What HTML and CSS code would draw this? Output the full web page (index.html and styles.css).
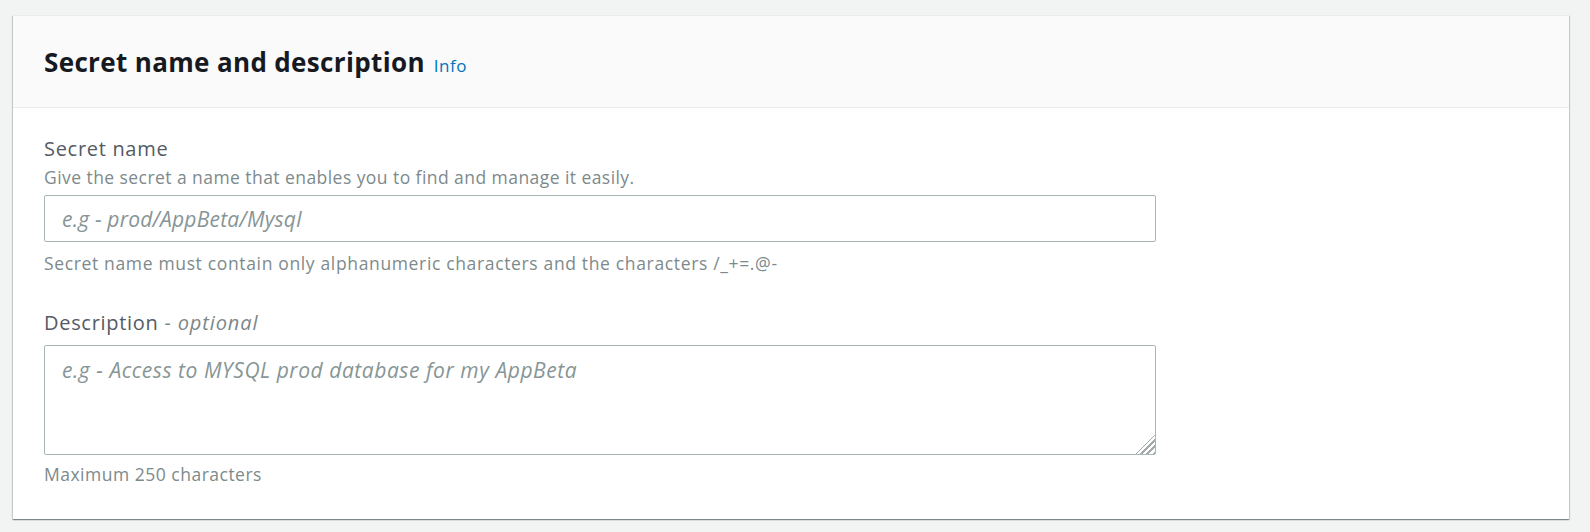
FILE: index.html
```html
<!DOCTYPE html>
<html lang="en">
<head>
<meta charset="utf-8">
<title>Secret name and description</title>
<link rel="stylesheet" href="styles.css">
</head>
<body>
  <section class="card">
    <header class="card-header">
      <h2 class="card-title">Secret name and description</h2>
      <a class="info-link" href="#">Info</a>
    </header>
    <div class="card-body">
      <div class="field">
        <label class="field-label" for="secret-name">Secret name</label>
        <div class="field-desc">Give the secret a name that enables you to find and manage it easily.</div>
        <input class="text-input" id="secret-name" type="text" placeholder="e.g - prod/AppBeta/Mysql">
        <div class="field-constraint">Secret name must contain only alphanumeric characters and the characters /_+=.@-</div>
      </div>
      <div class="field field-second">
        <label class="field-label" for="secret-desc">Description <span class="optional">- optional</span></label>
        <textarea class="text-area" id="secret-desc" placeholder="e.g - Access to MYSQL prod database for my AppBeta"></textarea>
        <div class="field-constraint field-max">Maximum 250 characters</div>
      </div>
    </div>
  </section>
</body>
</html>
```

FILE: styles.css
```css
html, body {
  margin: 0;
  background: #f2f3f3;
}

body {
  padding: 15px 21px 14px 13px;
  font-family: "Open Sans", "Noto Sans", sans-serif;
  color: #16191f;
}

.card {
  background: #ffffff;
  border-top: 1px solid #eaeded;
  box-shadow: 0 1px 1px 0 rgba(0, 28, 36, 0.3),
              1px 1px 1px 0 rgba(0, 28, 36, 0.15),
              -1px 1px 1px 0 rgba(0, 28, 36, 0.15);
}

.card-header {
  display: flex;
  align-items: baseline;
  gap: 9px;
  padding: 30px 31px 29px;
  background: #fafafa;
  border-bottom: 1px solid #eaeded;
}

.card-title {
  margin: 0;
  font-size: 26px;
  line-height: 32px;
  font-weight: 700;
  letter-spacing: 0.35px;
  color: #16191f;
}

.info-link {
  font-size: 17px;
  letter-spacing: 0.5px;
  color: #0073bb;
  text-decoration: none;
}

.card-body {
  padding: 31px 31px 36px;
}

.field {
  display: flex;
  flex-direction: column;
  align-items: flex-start;
}

.field-second {
  margin-top: 41px;
}

.field-label {
  font-size: 20px;
  line-height: 20px;
  letter-spacing: 0.7px;
  color: #545b64;
}

.optional {
  font-style: italic;
  color: #7b8789;
  letter-spacing: 0.9px;
}

.field-desc,
.field-constraint {
  font-size: 17.5px;
  line-height: 18px;
  letter-spacing: 0.5px;
  color: #7d8a8c;
}

.field-desc {
  margin-top: 9px;
  letter-spacing: 0.44px;
}

.text-input {
  box-sizing: border-box;
  width: 1112px;
  height: 47px;
  margin-top: 9px;
  padding: 1px 17px 0;
  border: 1px solid #aab7b8;
  border-radius: 2px;
  background: #ffffff;
  font-family: inherit;
  font-size: 21px;
  font-style: italic;
  letter-spacing: 0.2px;
  color: #16191f;
  outline: none;
}

.text-area {
  box-sizing: border-box;
  display: block;
  width: 1112px;
  height: 110px;
  margin-top: 12px;
  padding: 11px 17px 0;
  border: 1px solid #aab7b8;
  border-radius: 2px;
  font-family: inherit;
  font-size: 21px;
  line-height: 26px;
  font-style: italic;
  letter-spacing: 0.55px;
  color: #16191f;
  resize: none;
  outline: none;
  background-color: #ffffff;
  background-image:
    linear-gradient(135deg, #ffffff 50%, transparent 50%),
    repeating-linear-gradient(135deg, transparent 0 2.5px, #a3abad 2.5px 4.5px);
  background-size: 19px 19px, 19px 19px;
  background-position: right 0 bottom 0, right 0 bottom 0;
  background-repeat: no-repeat;
}

.text-input::placeholder,
.text-area::placeholder {
  color: #879596;
  opacity: 1;
}

.field-constraint {
  margin-top: 12px;
  letter-spacing: 0.65px;
}

.field-max {
  margin-top: 10px;
  letter-spacing: 0.5px;
}
```
